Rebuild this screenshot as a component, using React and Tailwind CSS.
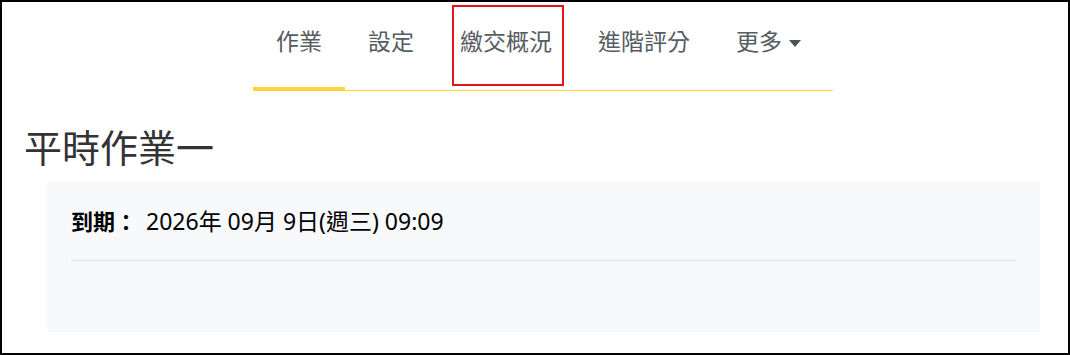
import { useState } from "react";

const tabs = ["作業", "設定", "繳交概況", "進階評分"];

const font = "font-['Noto_Sans','Noto_Sans_CJK_TC',sans-serif]";

export default function App() {
  const [active, setActive] = useState(0);

  return (
    <div className={`relative h-[355px] w-[1070px] overflow-hidden border-2 border-black bg-white ${font}`}>
      <div className="ml-[251px] mt-[-2px] w-[580px]">
        <nav className="relative z-10 flex">
          {tabs.map((tab, i) => (
            <button
              key={tab}
              type="button"
              onClick={() => setActive(i)}
              className={`flex h-[91px] items-center border-b-[4px] px-[23px] pb-[4px] text-[23px] leading-none text-[#555c62] ${
                active === i ? "border-[#ffd43b]" : "border-transparent"
              }`}
            >
              {tab}
            </button>
          ))}
          <button
            type="button"
            className="flex h-[91px] items-center gap-[6px] border-b-[4px] border-transparent px-[23px] pb-[4px] text-[23px] leading-none text-[#555c62]"
          >
            更多
            <svg width="14" height="9" viewBox="0 0 14 9" className="mt-[3px]">
              <path d="M1 1h12L7 8z" fill="#4a545b" />
            </svg>
          </button>
        </nav>
        <div className="-mt-px h-px bg-[#ffd43b]" />
      </div>

      <div className="pointer-events-none absolute left-[450px] top-[3px] h-[81px] w-[112px] border-2 border-[#e3141c]" />

      <h1 className="ml-[22px] mt-[32px] text-[38px] leading-[48px] text-[#333]">平時作業一</h1>

      <section className="ml-[45px] mt-[11px] h-[150px] w-[993px] bg-[#f8f9fa] px-[24px] pt-[24px]">
        <div className="flex items-center leading-[30px] text-black">
          <span className="text-[22px] font-bold">到期：</span>
          <span className="ml-[9px] text-[23px]">2026年 09月 9日(週三) 09:09</span>
        </div>
        <div className="mt-[24px] border-t border-[#dee2e6]" />
      </section>
    </div>
  );
}
